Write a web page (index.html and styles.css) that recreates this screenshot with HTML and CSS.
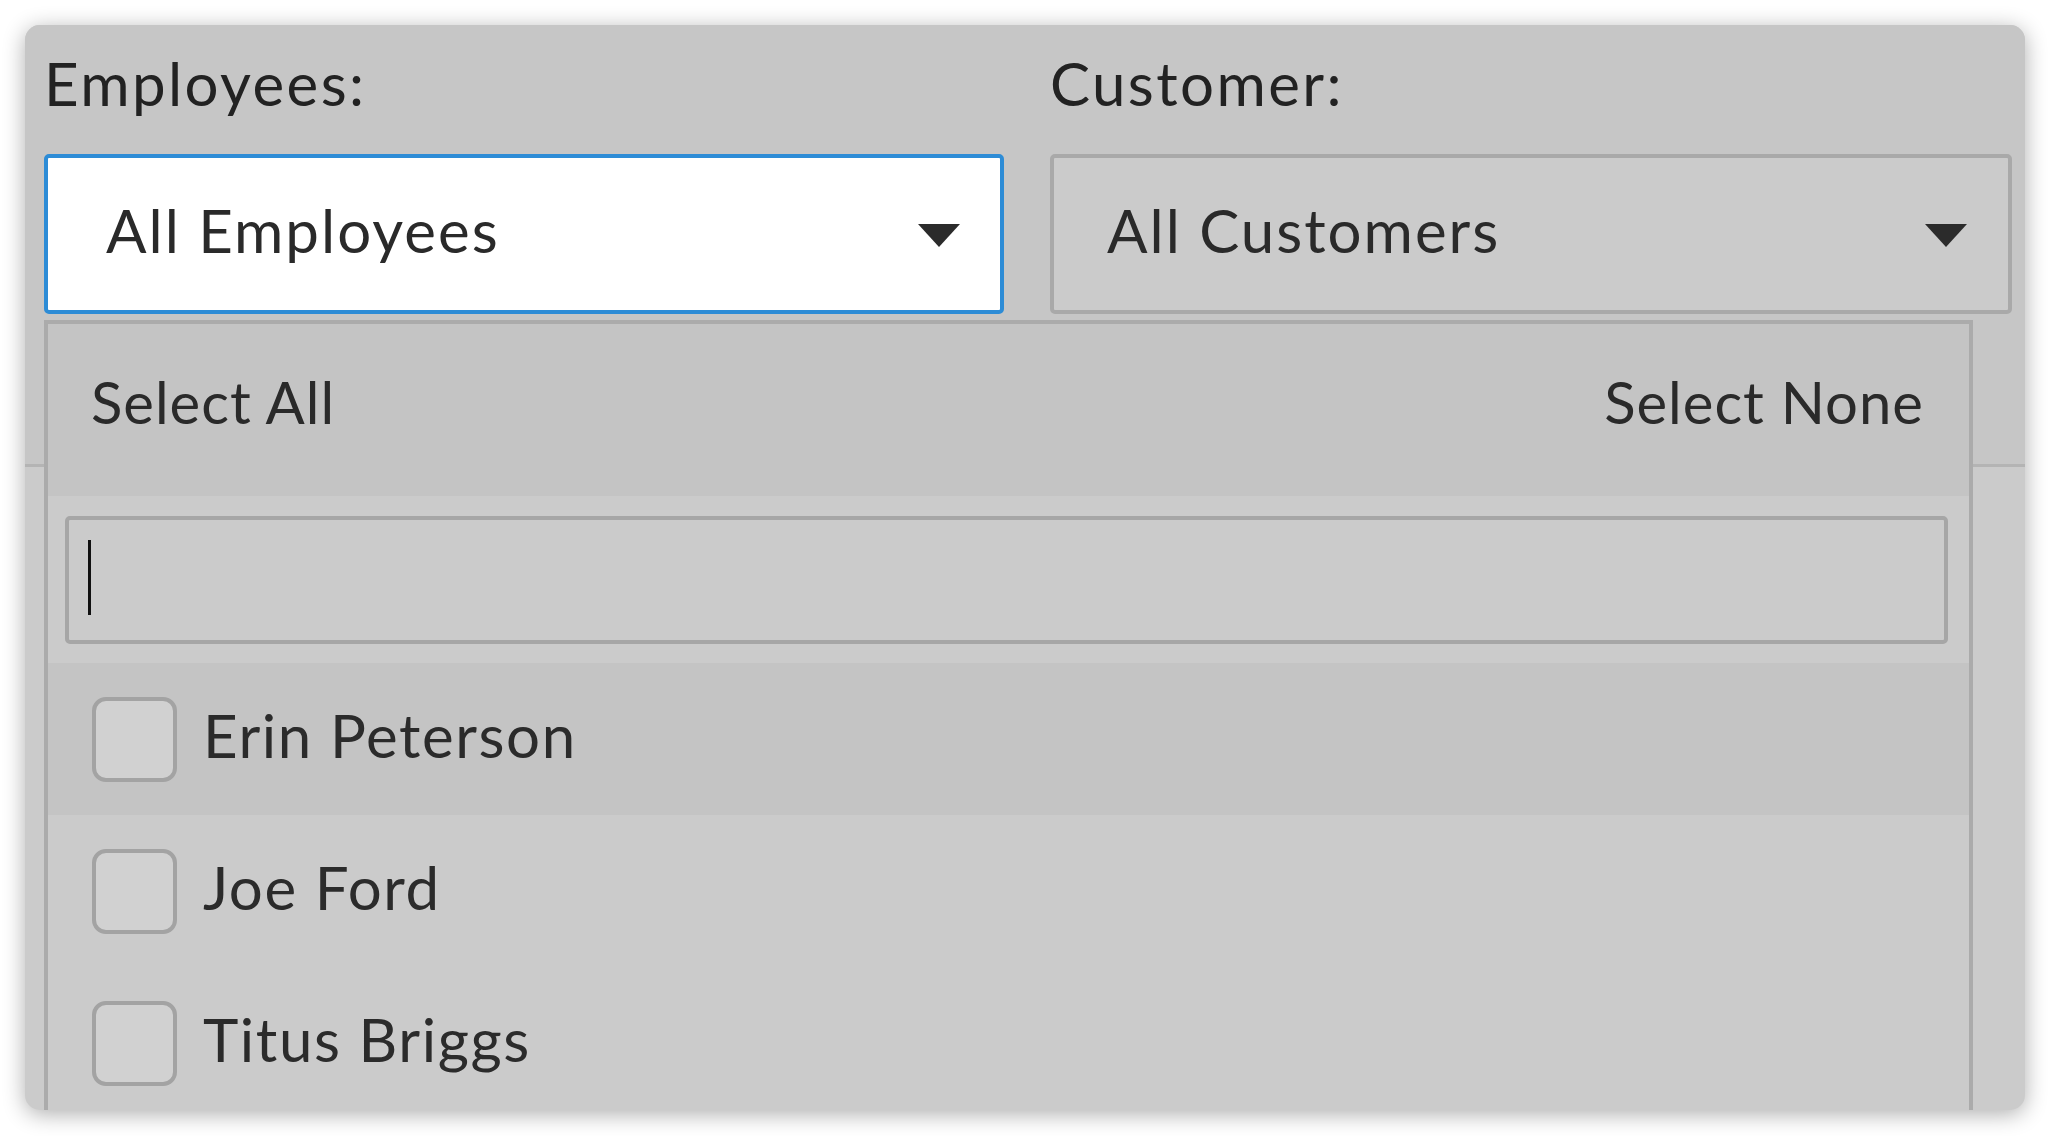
FILE: index.html
```html
<!DOCTYPE html>
<html lang="en">
<head>
<meta charset="utf-8">
<title>Filters</title>
<link rel="stylesheet" href="styles.css">
</head>
<body>
<div class="card">
  <div class="filters">
    <div class="field">
      <div class="label">Employees:</div>
      <div class="select select--active">
        <span class="select-text">All Employees</span>
        <span class="tri"></span>
      </div>
    </div>
    <div class="field">
      <div class="label">Customer:</div>
      <div class="select">
        <span class="select-text">All Customers</span>
        <span class="tri"></span>
      </div>
    </div>
  </div>
  <div class="body"></div>

  <div class="dropdown">
    <div class="dd-head">
      <span class="dd-link">Select All</span>
      <span class="dd-link">Select None</span>
    </div>
    <div class="dd-search">
      <div class="search-input"><span class="text-caret"></span></div>
    </div>
    <ul class="dd-list">
      <li class="dd-item dd-item--hover"><span class="checkbox"></span><span class="dd-name">Erin Peterson</span></li>
      <li class="dd-item"><span class="checkbox"></span><span class="dd-name">Joe Ford</span></li>
      <li class="dd-item"><span class="checkbox"></span><span class="dd-name">Titus Briggs</span></li>
    </ul>
  </div>
</div>
</body>
</html>
```
FILE: styles.css
```css
* { box-sizing: border-box; }

html, body {
  margin: 0;
  padding: 0;
  background: #ffffff;
  width: 2050px;
  height: 1136px;
  overflow: hidden;
}

body {
  font-family: Lato, "Open Sans", sans-serif;
  font-size: 60px;
  line-height: 72px;
  letter-spacing: 1.6px;
  color: #262626;
}

.card {
  position: relative;
  margin: 25px 0 0 25px;
  width: 2000px;
  height: 1085px;
  border-radius: 15px;
  overflow: hidden;
  background: #cbcbcb;
  box-shadow: 0 4px 22px rgba(0, 0, 0, 0.32);
}

.filters {
  height: 442px;
  padding: 22px 0 0 19px;
  background: #c6c6c6;
  border-bottom: 3px solid #b4b4b4;
  display: grid;
  grid-template-columns: 960px 962px;
  column-gap: 46px;
  align-items: start;
}

.label {
  height: 72px;
  margin-bottom: 35px;
  letter-spacing: 2.4px;
  color: #222222;
}

.select {
  height: 160px;
  border: 4px solid #a9a9a9;
  border-radius: 5px;
  background: #cbcbcb;
  display: flex;
  align-items: center;
  justify-content: space-between;
  padding: 0 41px 0 53px;
}

.select--active {
  border-color: #2d8cd6;
  background: #ffffff;
  padding-left: 58px;
  padding-right: 40px;
}

.select-text {
  padding-bottom: 8px;
  letter-spacing: 2px;
  color: #2a2a2a;
}

.tri {
  width: 0;
  height: 0;
  border-left: 21px solid transparent;
  border-right: 21px solid transparent;
  border-top: 23px solid #2b2b2b;
  margin-top: 2px;
}

.dropdown {
  position: absolute;
  top: 295px;
  left: 19px;
  width: 1929px;
  bottom: -10px;
  border: 4px solid #ababab;
  border-bottom: none;
  background: #cbcbcb;
}

.dd-head {
  height: 172px;
  padding: 42px 45px 0 43px;
  display: flex;
  justify-content: space-between;
  align-items: flex-start;
  background: #c4c4c4;
  font-size: 58px;
  letter-spacing: 1px;
}

.dd-link {
  color: #2a2a2a;
}

.dd-search {
  padding: 20px 21px 19px 17px;
  background: #cbcbcb;
}

.search-input {
  height: 128px;
  border: 4px solid #a6a6a6;
  border-radius: 5px;
  background: #cbcbcb;
  display: flex;
  align-items: center;
  padding-left: 19px;
}

.text-caret {
  display: block;
  width: 3px;
  height: 75px;
  background: #111111;
  margin-bottom: 6px;
}

.dd-list {
  list-style: none;
  margin: 0;
  padding: 0;
}

.dd-item {
  height: 152px;
  display: flex;
  align-items: center;
  gap: 26px;
  padding-left: 44px;
  background: #cbcbcb;
}

.dd-item--hover {
  background: #c4c4c4;
}

.checkbox {
  display: block;
  width: 85px;
  height: 85px;
  border: 4px solid #a3a3a3;
  border-radius: 14px;
  background: #d1d1d1;
  flex: none;
}

.dd-name {
  padding-bottom: 8px;
  color: #2b2b2b;
}
```
